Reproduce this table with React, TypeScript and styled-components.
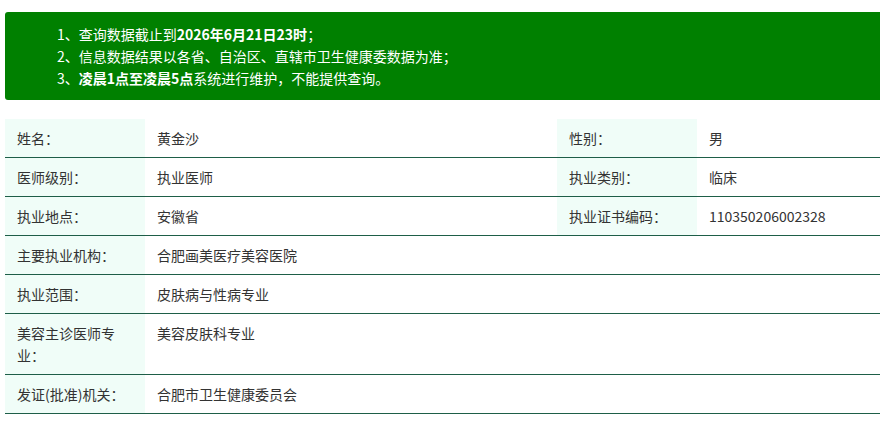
import React from "react";
import styled, { createGlobalStyle } from "styled-components";

const Global = createGlobalStyle`
  html, body { margin: 0; padding: 0; background: #fff; overflow: hidden; }
  body { font-family: "Noto Sans CJK SC", "Noto Sans", sans-serif; }
`;

const Page = styled.div`
  width: 900px;
  padding: 12px 0 0 5px;
`;

const Notice = styled.div`
  background: #008000;
  border-radius: 3px;
  padding: 11px 0 11px 52px;
  color: #fff;
  font-size: 14px;
  line-height: 22px;
`;

const NoticeLine = styled.div`
  white-space: nowrap;
`;

const Strong = styled.b`
  font-weight: 700;
`;

const Table = styled.table`
  margin-top: 19px;
  width: 895px;
  border-collapse: collapse;
  table-layout: fixed;
  font-size: 14px;
  line-height: 22px;
  color: #333;
`;

const Row = styled.tr`
  border-bottom: 1px solid #1e5e48;
`;

const Label = styled.td`
  width: 140px;
  box-sizing: border-box;
  padding: 8px 12px;
  background: #f0fdf8;
  vertical-align: top;
`;

const Value = styled.td<{ $w?: number }>`
  box-sizing: border-box;
  padding: 8px 12px;
  vertical-align: top;
  ${(p) => (p.$w ? `width: ${p.$w}px;` : "")}
`;

const notes = [
  <>1、查询数据截止到<Strong>2026年6月21日23时</Strong>；</>,
  <>2、信息数据结果以各省、自治区、直辖市卫生健康委数据为准；</>,
  <>3、<Strong>凌晨1点至凌晨5点</Strong>系统进行维护，不能提供查询。</>,
];

const pairs: [string, string, string, string][] = [
  ["姓名：", "黄金沙", "性别：", "男"],
  ["医师级别：", "执业医师", "执业类别：", "临床"],
  ["执业地点：", "安徽省", "执业证书编码：", "110350206002328"],
];

const wide: [string, string][] = [
  ["主要执业机构：", "合肥画美医疗美容医院"],
  ["执业范围：", "皮肤病与性病专业"],
  ["美容主诊医师专业：", "美容皮肤科专业"],
  ["发证(批准)机关：", "合肥市卫生健康委员会"],
];

export default function App() {
  return (
    <Page>
      <Global />
      <Notice>
        {notes.map((n, i) => (
          <NoticeLine key={i}>{n}</NoticeLine>
        ))}
      </Notice>
      <Table>
        <colgroup>
          <col style={{ width: 140 }} />
          <col style={{ width: 412 }} />
          <col style={{ width: 140 }} />
          <col />
        </colgroup>
        <tbody>
          {pairs.map((p) => (
            <Row key={p[0]}>
              <Label>{p[0]}</Label>
              <Value>{p[1]}</Value>
              <Label>{p[2]}</Label>
              <Value>{p[3]}</Value>
            </Row>
          ))}
          {wide.map((p) => (
            <Row key={p[0]}>
              <Label>{p[0]}</Label>
              <Value colSpan={3}>{p[1]}</Value>
            </Row>
          ))}
        </tbody>
      </Table>
    </Page>
  );
}
